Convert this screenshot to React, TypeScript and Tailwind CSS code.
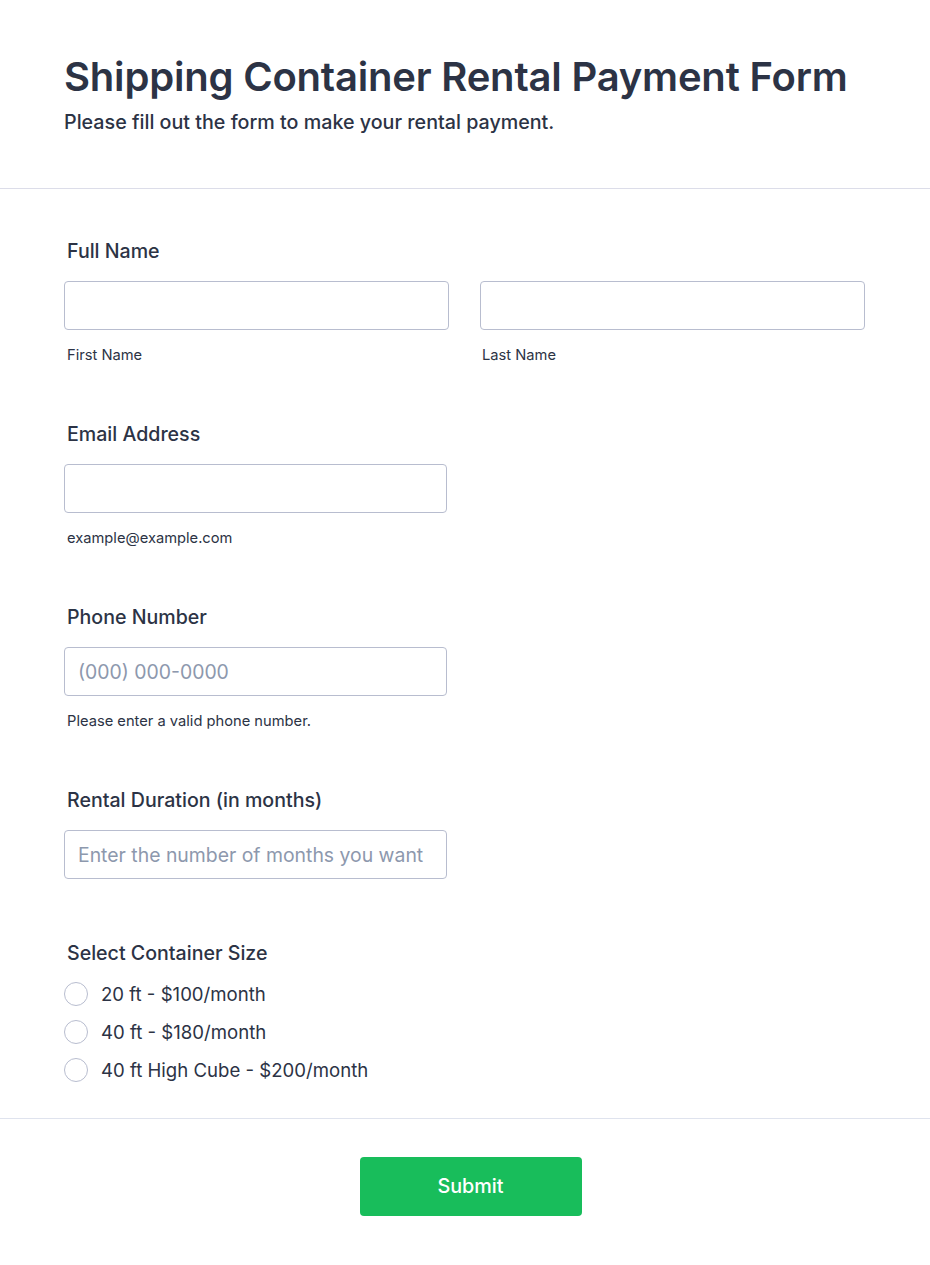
import React from 'react'

const font = { fontFamily: 'Inter, "Noto Sans", sans-serif' }

function Label({ children }: { children: React.ReactNode }) {
  return <div className="pl-[3px] text-[19.6px] leading-[24px] font-medium text-[#2c3345]">{children}</div>
}

function Sub({ children }: { children: React.ReactNode }) {
  return <div className="pl-[3px] mt-[15px] text-[14.7px] leading-[20px] text-[#2c3345]">{children}</div>
}

function TextInput({ placeholder, className = '' }: { placeholder?: string; className?: string }) {
  return (
    <input
      type="text"
      placeholder={placeholder}
      className={`h-[49px] rounded-[4px] border border-[#b8bdcf] bg-white px-[13px] text-[19.4px] text-[#2c3345] placeholder:text-[#8d98ad] outline-none ${className}`}
    />
  )
}

const sizes = ['20 ft - $100/month', '40 ft - $180/month', '40 ft High Cube - $200/month']

export default function App() {
  return (
    <div className="min-h-[1265px] bg-white" style={font}>
      <header className="h-[189px] border-b border-[#dcdde9] px-[64px] pt-[53px]">
        <h1 className="text-[40px] leading-[48px] font-semibold text-[#2c3345] tracking-[-0.2px]">
          Shipping Container Rental Payment Form
        </h1>
        <p className="mt-[7px] text-[19.7px] leading-[28px] font-medium text-[#2c3345]">
          Please fill out the form to make your rental payment.
        </p>
      </header>

      <form className="px-[64px] pt-[50px]" onSubmit={(e) => e.preventDefault()}>
        <section>
          <Label>Full Name</Label>
          <div className="mt-[18px] flex gap-[31px]">
            <div className="w-[385px]">
              <TextInput className="w-full" />
              <Sub>First Name</Sub>
            </div>
            <div className="w-[385px]">
              <TextInput className="w-full" />
              <div className="-ml-[1px]">
                <Sub>Last Name</Sub>
              </div>
            </div>
          </div>
        </section>

        <section className="mt-[57px]">
          <Label>Email Address</Label>
          <div className="mt-[18px] w-[383px]">
            <TextInput className="w-full" />
            <Sub>example@example.com</Sub>
          </div>
        </section>

        <section className="mt-[57px]">
          <Label>Phone Number</Label>
          <div className="mt-[18px] w-[383px]">
            <TextInput className="w-full" placeholder="(000) 000-0000" />
            <Sub>Please enter a valid phone number.</Sub>
          </div>
        </section>

        <section className="mt-[57px]">
          <Label>Rental Duration (in months)</Label>
          <div className="mt-[18px] w-[383px]">
            <TextInput className="w-full" placeholder="Enter the number of months you want" />
          </div>
        </section>

        <section className="mt-[62px] pb-[36px]">
          <Label>Select Container Size</Label>
          <div className="mt-[17px] flex flex-col gap-[14px]">
            {sizes.map((s) => (
              <label key={s} className="flex items-center gap-[13px] cursor-pointer">
                <span className="h-[24px] w-[24px] rounded-full border border-[#b8bdcf] bg-white" />
                <span className="text-[18.6px] leading-[24px] text-[#2c3345]">{s}</span>
              </label>
            ))}
          </div>
        </section>
      </form>

      <div className="border-t border-[#dfe3ee] pt-[38px] flex justify-center pl-[11px]">
        <button
          type="submit"
          className="h-[59px] w-[222px] rounded-[4px] bg-[#18bd5b] text-[19.8px] font-medium text-white"
        >
          Submit
        </button>
      </div>
    </div>
  )
}
